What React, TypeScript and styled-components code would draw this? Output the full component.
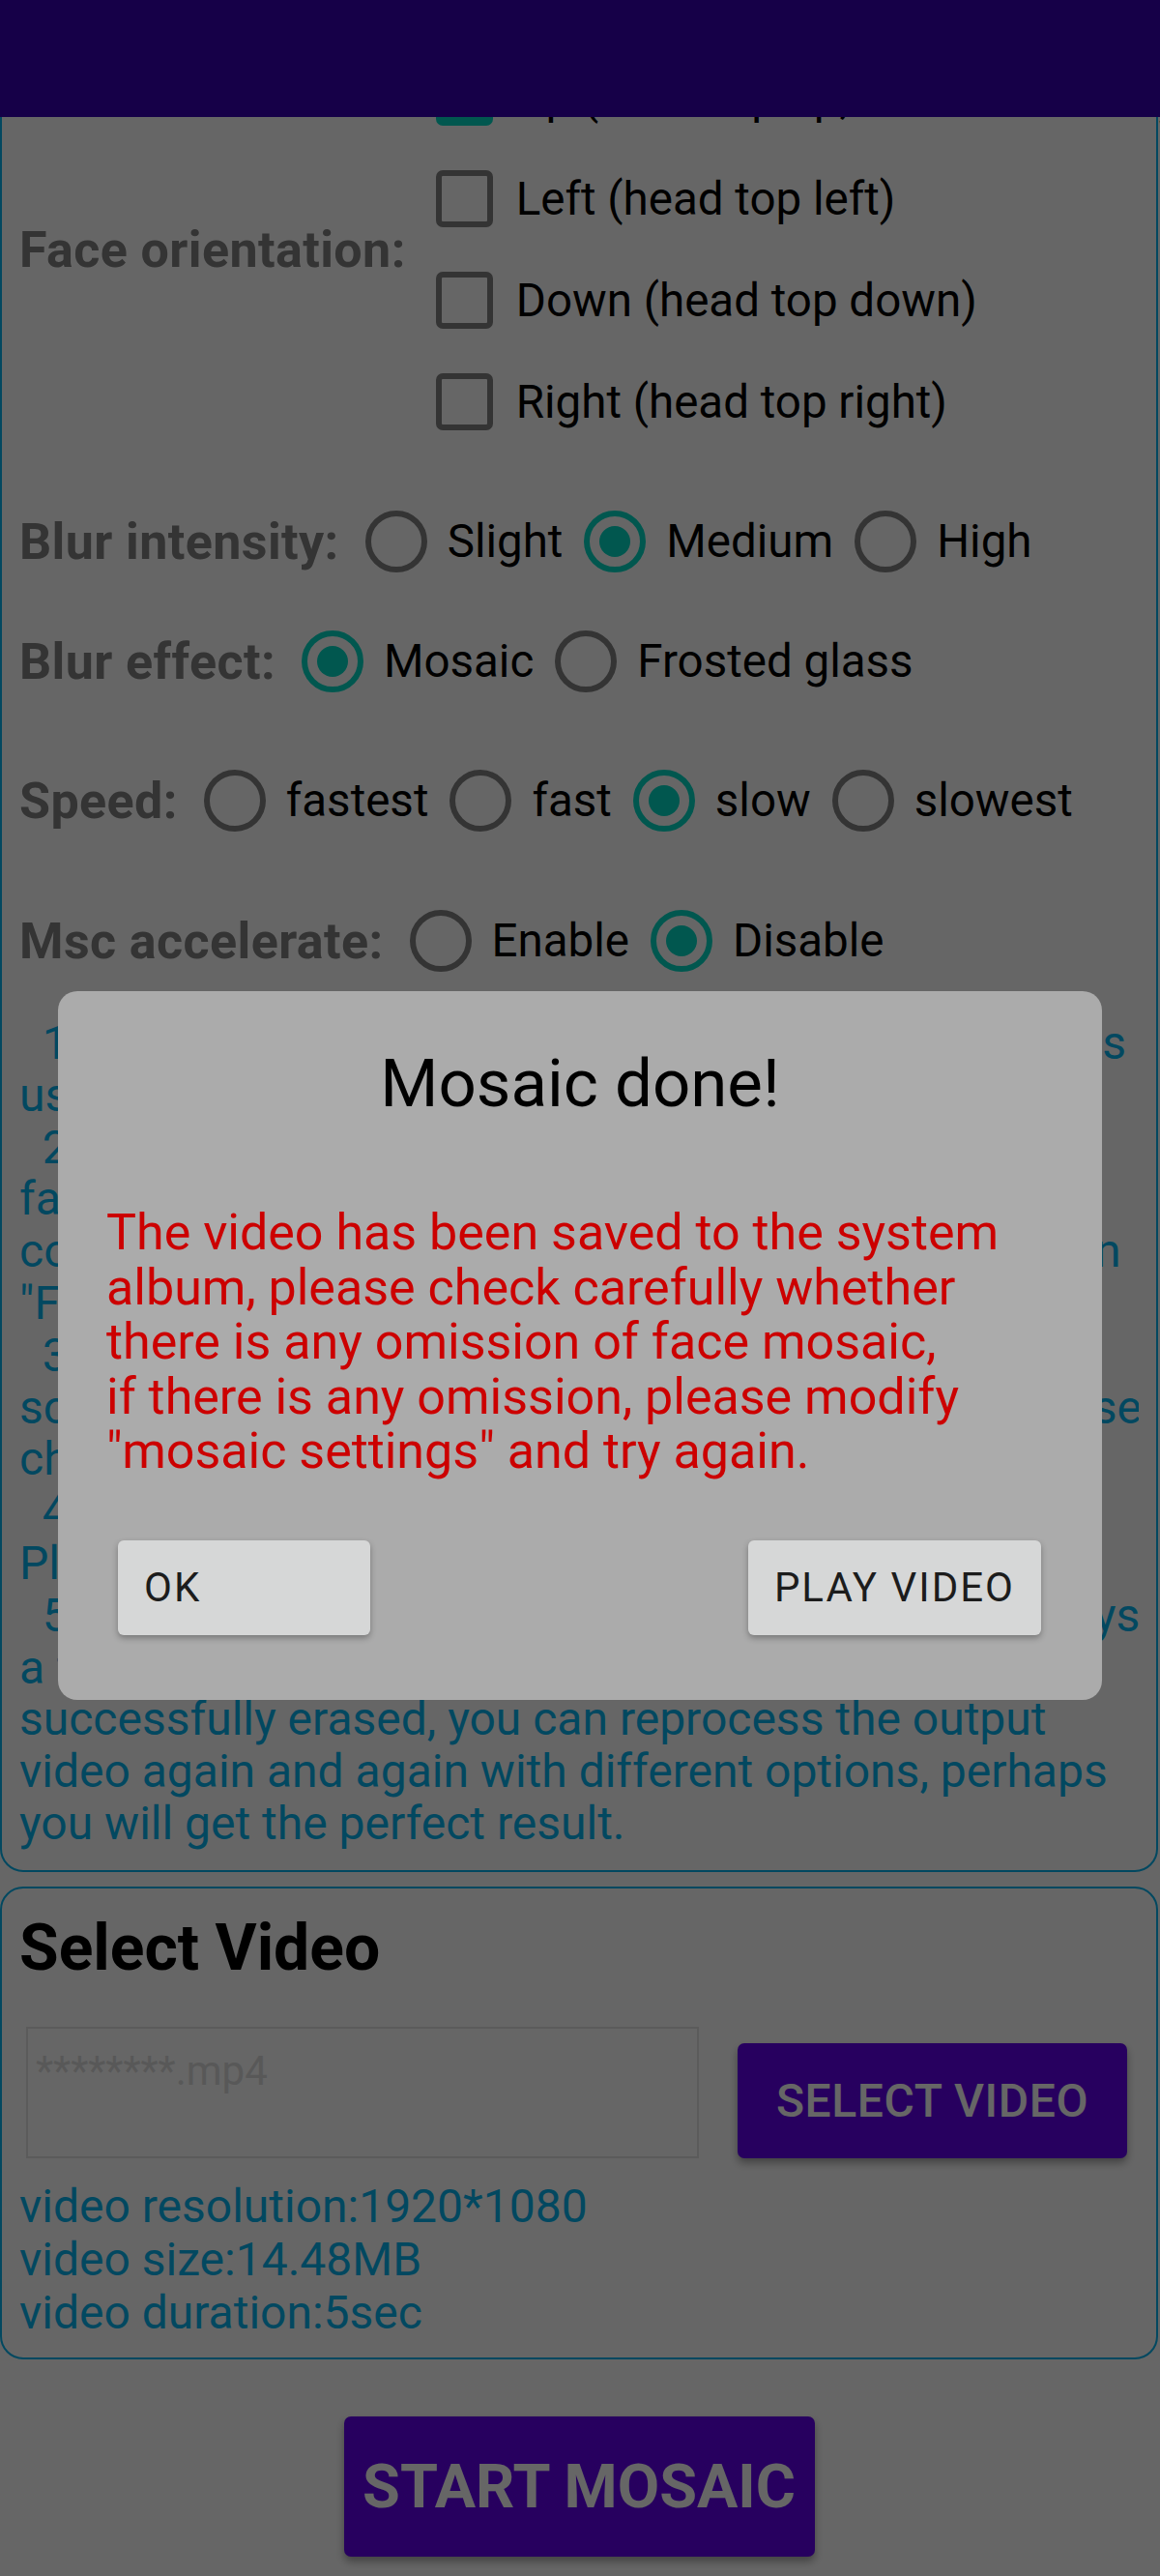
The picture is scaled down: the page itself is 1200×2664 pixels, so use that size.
import React from "react";
import styled, { createGlobalStyle } from "styled-components";

const Global = createGlobalStyle`
  html, body { margin: 0; padding: 0; background: #ffffff; }
  body { font-family: Roboto, "Noto Sans", sans-serif; color: #000; }
  * { box-sizing: border-box; }
`;

const PRIMARY = "#6200EE";
const PRIMARY_DARK = "#3700B3";
const TEAL = "#03DAC5";
const MUTED = "#828282";
const BLUE = "#05B4F0";

const Page = styled.div`
  position: relative;
  width: 1200px;
  min-height: 2664px;
  overflow: hidden;
  background: #ffffff;
`;

const AppBar = styled.header`
  position: fixed;
  top: 0;
  left: 0;
  right: 0;
  height: 121px;
  background: ${PRIMARY_DARK};
  z-index: 2;
`;

const Main = styled.main`
  display: flex;
  flex-direction: column;
  padding-right: 2px;
`;

const Card = styled.section<{ $pt: number; $pb: number; $mt?: number }>`
  border: 2px solid ${BLUE};
  border-radius: 24px;
  padding: ${(p) => p.$pt}px 18px ${(p) => p.$pb}px 18px;
  margin-top: ${(p) => p.$mt ?? 0}px;
  display: flex;
  flex-direction: column;
`;

const FieldLabel = styled.span<{ $mr: number }>`
  font-weight: 700;
  font-size: 52px;
  letter-spacing: 0.4px;
  color: ${MUTED};
  white-space: nowrap;
  margin-right: ${(p) => p.$mr}px;
`;

const FaceRow = styled.div`
  display: flex;
  align-items: center;
`;

const CheckList = styled.div`
  display: flex;
  flex-direction: column;
`;

const CheckRow = styled.label`
  height: 105px;
  display: flex;
  align-items: center;
  gap: 24px;
`;

const CheckBox = styled.span<{ $checked?: boolean }>`
  width: 59px;
  height: 59px;
  border-radius: 7px;
  border: 6px solid ${(p) => (p.$checked ? TEAL : MUTED)};
  background: ${(p) => (p.$checked ? TEAL : "transparent")};
  display: flex;
  align-items: center;
  justify-content: center;
  flex-shrink: 0;
`;

const OptionText = styled.span`
  font-size: 47.5px;
  color: #000;
  white-space: nowrap;
`;

const RadioRow = styled.div<{ $gap: number }>`
  height: 104px;
  margin-top: ${(p) => p.$gap}px;
  display: flex;
  align-items: center;
`;

const RadioGroup = styled.div`
  display: flex;
  align-items: center;
  gap: 22px;
`;

const RadioItem = styled.label`
  display: flex;
  align-items: center;
  gap: 21px;
`;

const RadioCircle = styled.span<{ $checked?: boolean }>`
  width: 64px;
  height: 64px;
  border-radius: 50%;
  border: 6px solid ${(p) => (p.$checked ? TEAL : MUTED)};
  display: flex;
  align-items: center;
  justify-content: center;
  flex-shrink: 0;
  &::after {
    content: "";
    width: 32px;
    height: 32px;
    border-radius: 50%;
    background: ${(p) => (p.$checked ? TEAL : "transparent")};
  }
`;

const Tips = styled.p`
  margin: 27px 0 0 0;
  font-size: 48px;
  line-height: 53.8px;
  color: ${BLUE};
  white-space: pre;
  overflow: hidden;
`;

const CardTitle = styled.h2`
  margin: 0;
  font-size: 66px;
  line-height: 75px;
  font-weight: 700;
  color: #000;
`;

const PickRow = styled.div`
  margin-top: 44px;
  padding-left: 7px;
  display: flex;
  align-items: flex-start;
`;

const FileField = styled.div`
  width: 696px;
  height: 136px;
  border: 2px solid #e4e4e4;
  padding: 19px 8px;
  font-size: 42px;
  color: #dcdcdc;
`;

const PrimaryButton = styled.button<{ $w: number; $h: number; $size: number }>`
  width: ${(p) => p.$w}px;
  height: ${(p) => p.$h}px;
  border: none;
  border-radius: 7px;
  background: ${PRIMARY};
  color: #ffffff;
  font-family: Roboto, "Noto Sans", sans-serif;
  font-size: ${(p) => p.$size}px;
  box-shadow: 0 5px 8px rgba(0, 0, 0, 0.35);
  display: flex;
  align-items: center;
  justify-content: center;
  padding: 0;
`;

const SelectButton = styled(PrimaryButton)`
  margin: 17px 0 0 40px;
  font-weight: 500;
  letter-spacing: 0.6px;
`;

const StartButton = styled(PrimaryButton)`
  margin: 59px auto 19px auto;
  font-weight: 700;
`;

const Info = styled.div`
  margin-top: 22px;
  font-size: 48px;
  line-height: 55px;
  color: ${BLUE};
`;

const Scrim = styled.div`
  position: fixed;
  inset: 0;
  background: rgba(0, 0, 0, 0.6);
  z-index: 10;
  display: flex;
  justify-content: center;
  align-items: flex-start;
  padding-top: 1025px;
`;

const Dialog = styled.div`
  width: 1080px;
  background: #ababab;
  border-radius: 20px;
  padding: 57px 50px 67px 50px;
  display: flex;
  flex-direction: column;
`;

const DialogTitle = styled.h1`
  margin: 0;
  text-align: center;
  font-size: 69px;
  line-height: 77px;
  font-weight: 400;
  color: #000;
`;

const DialogMessage = styled.p`
  margin: 88px 0 0 0;
  font-size: 52px;
  line-height: 56.5px;
  color: #cc0000;
  white-space: pre;
`;

const DialogActions = styled.div`
  margin-top: 63px;
  padding: 0 13px 0 12px;
  display: flex;
  justify-content: space-between;
`;

const DialogButton = styled.button<{ $minW?: number }>`
  height: 98px;
  min-width: ${(p) => p.$minW ?? 0}px;
  padding: 0 27px;
  border: none;
  border-radius: 6px;
  background: #d6d7d7;
  color: #1c1c1c;
  font-family: Roboto, "Noto Sans", sans-serif;
  font-size: 42px;
  letter-spacing: 2px;
  text-align: left;
  box-shadow: 0 3px 6px rgba(0, 0, 0, 0.3);
`;

const CheckMark = () => (
  <svg width="40" height="40" viewBox="0 0 24 24">
    <path d="M4 12.5l5 5L20 6.5" fill="none" stroke="#fff" strokeWidth="3.2" />
  </svg>
);

const orientations = [
  { text: "Up (head top up, most common)", checked: true },
  { text: "Left (head top left)", checked: false },
  { text: "Down (head top down)", checked: false },
  { text: "Right (head top right)", checked: false },
];

type RadioOpt = { text: string; checked?: boolean };
const radioRows: { label: string; gap: number; options: RadioOpt[] }[] = [
  {
    label: "Blur intensity:",
    gap: 40,
    options: [{ text: "Slight" }, { text: "Medium", checked: true }, { text: "High" }],
  },
  {
    label: "Blur effect:",
    gap: 20,
    options: [{ text: "Mosaic", checked: true }, { text: "Frosted glass" }],
  },
  {
    label: "Speed:",
    gap: 40,
    options: [
      { text: "fastest" },
      { text: "fast" },
      { text: "slow", checked: true },
      { text: "slowest" },
    ],
  },
  {
    label: "Msc accelerate:",
    gap: 41,
    options: [{ text: "Enable" }, { text: "Disable", checked: true }],
  },
];

const tips = [
  "  1. Face detection is done on the phone, no internet is",
  "used, so your privacy is absolutely safe.",
  "  2. If faces in the video are lying or upside down,",
  "faces may not be recognized, please check the",
  "corresponding orientation, you can choose multiple in",
  "\"Face orientation\" to avoid missing faces.",
  "  3. The higher the blur intensity, the more blurred,",
  "scenes with many faces take longer to process, please",
  "choose the options according to your needs.",
  "  4. If processing fails or the video can't be played,",
  "Please set \"Msc accelerate\" to \"Disable\".",
  "  5. Face recognition is not perfect, so there will always",
  "a few faces that are missed. If some faces are not",
  "successfully erased, you can reprocess the output",
  "video again and again with different options, perhaps",
  "you will get the perfect result.",
].join("\n");

const message = [
  "The video has been saved to the system",
  "album, please check carefully whether",
  "there is any omission of face mosaic,",
  "if there is any omission, please modify",
  "\"mosaic settings\" and try again.",
].join("\n");

export default function App() {
  return (
    <Page>
      <Global />
      <AppBar />
      <Main>
        <Card $pt={46} $pb={21}>
          <FaceRow>
            <FieldLabel $mr={31}>Face orientation:</FieldLabel>
            <CheckList>
              {orientations.map((o) => (
                <CheckRow key={o.text}>
                  <CheckBox $checked={o.checked}>{o.checked && <CheckMark />}</CheckBox>
                  <OptionText>{o.text}</OptionText>
                </CheckRow>
              ))}
            </CheckList>
          </FaceRow>
          {radioRows.map((row) => (
            <RadioRow key={row.label} $gap={row.gap}>
              <FieldLabel $mr={27}>{row.label}</FieldLabel>
              <RadioGroup>
                {row.options.map((opt) => (
                  <RadioItem key={opt.text}>
                    <RadioCircle $checked={opt.checked} />
                    <OptionText>{opt.text}</OptionText>
                  </RadioItem>
                ))}
              </RadioGroup>
            </RadioRow>
          ))}
          <Tips>{tips}</Tips>
        </Card>
        <Card $pt={24} $pb={19} $mt={15}>
          <CardTitle>Select Video</CardTitle>
          <PickRow>
            <FileField>********.mp4</FileField>
            <SelectButton $w={403} $h={119} $size={48}>
              SELECT VIDEO
            </SelectButton>
          </PickRow>
          <Info>
            <div>video resolution:1920*1080</div>
            <div>video size:14.48MB</div>
            <div>video duration:5sec</div>
          </Info>
        </Card>
        <StartButton $w={487} $h={145} $size={63}>
          START MOSAIC
        </StartButton>
      </Main>
      <Scrim>
        <Dialog>
          <DialogTitle>Mosaic done!</DialogTitle>
          <DialogMessage>{message}</DialogMessage>
          <DialogActions>
            <DialogButton $minW={261}>OK</DialogButton>
            <DialogButton>PLAY VIDEO</DialogButton>
          </DialogActions>
        </Dialog>
      </Scrim>
    </Page>
  );
}
